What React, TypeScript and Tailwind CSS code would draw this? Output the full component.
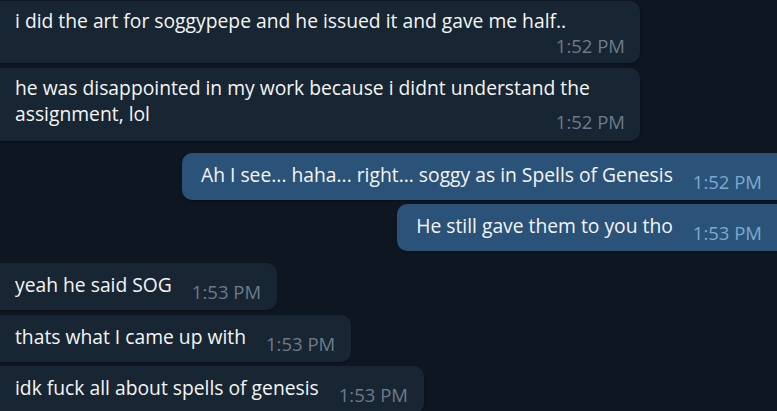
type Message = {
  text: string[];
  time: string;
  out?: boolean;
  wide?: boolean;
};

const messages: Message[] = [
  { text: ["i did the art for soggypepe and he issued it and gave me half.."], time: "1:52 PM", wide: true },
  { text: ["he was disappointed in my work because i didnt understand the", "assignment, lol"], time: "1:52 PM", wide: true },
  { text: ["Ah I see... haha... right... soggy as in Spells of Genesis"], time: "1:52 PM", out: true },
  { text: ["He still gave them to you tho"], time: "1:53 PM", out: true },
  { text: ["yeah he said SOG"], time: "1:53 PM" },
  { text: ["thats what I came up with"], time: "1:53 PM" },
  { text: ["idk fuck all about spells of genesis"], time: "1:53 PM" },
];

function Bubble({ m }: { m: Message }) {
  const bubbleColor = m.out ? "bg-[#2b5278]" : "bg-[#182533]";
  const timeColor = m.out ? "text-[#7da8d3]" : "text-[#6c7b8b]";

  if (m.wide) {
    // long messages: fixed width, time tucked under the text on the right
    const multi = m.text.length > 1;
    return (
      <div
        className={`w-[640px] rounded-r-[10px] ${bubbleColor} pl-[15px] pr-[15px] pt-[7px] ${
          multi ? "pb-[8px]" : "pb-[6px]"
        } shadow-[0_1px_2px_rgba(0,0,0,0.35)]`}
      >
        {m.text.map((line, i) => (
          <div key={i} className="text-[19.3px] leading-[26px] text-[#f5f5f5]">
            {line}
          </div>
        ))}
        <div className={`text-right text-[18.5px] leading-[22px] ${timeColor} ${multi ? "-mt-[16px]" : "mt-[1px]"}`}>
          {m.time}
        </div>
      </div>
    );
  }

  return (
    <div
      className={`flex items-baseline gap-[20px] ${bubbleColor} pt-[9px] pb-[12px] shadow-[0_1px_2px_rgba(0,0,0,0.35)] ${
        m.out ? "rounded-l-[10px] pl-[19px] pr-[16px] -mr-[1px]" : "rounded-r-[10px] pl-[15px] pr-[16px]"
      }`}
    >
      <span className="text-[19.3px] leading-[26px] text-[#f5f5f5] whitespace-nowrap">{m.text[0]}</span>
      <span className={`translate-y-[7px] text-[18.5px] leading-[22px] whitespace-nowrap ${timeColor}`}>{m.time}</span>
    </div>
  );
}

export default function App() {
  return (
    <div
      className="w-[777px] h-[411px] overflow-hidden bg-[#0e1621] pt-[1px]"
      style={{ fontFamily: '"Open Sans", "Noto Sans", sans-serif' }}
    >
      <div className="flex flex-col">
        {messages.map((m, i) => {
          const prev = messages[i - 1];
          const newGroup = prev && !!prev.out !== !!m.out;
          return (
            <div
              key={i}
              className={`flex ${m.out ? "justify-end" : "justify-start"} ${
                i === 0 ? "" : newGroup ? "mt-[12px]" : "mt-[4.5px]"
              }`}
            >
              <Bubble m={m} />
            </div>
          );
        })}
      </div>
    </div>
  );
}
